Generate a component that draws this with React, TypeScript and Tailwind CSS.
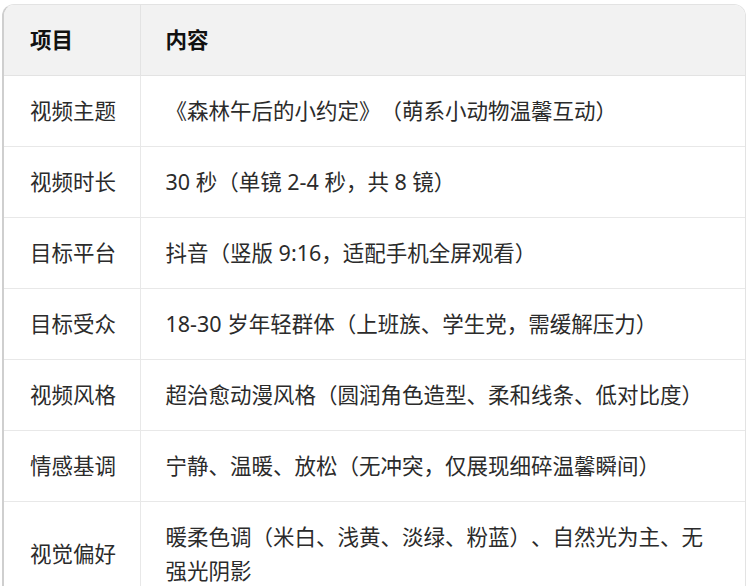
const ROWS: [string, string][] = [
  ["视频主题", "《森林午后的小约定》（萌系小动物温馨互动）"],
  ["视频时长", "30 秒（单镜 2-4 秒，共 8 镜）"],
  ["目标平台", "抖音（竖版 9:16，适配手机全屏观看）"],
  ["目标受众", "18-30 岁年轻群体（上班族、学生党，需缓解压力）"],
  ["视频风格", "超治愈动漫风格（圆润角色造型、柔和线条、低对比度）"],
  ["情感基调", "宁静、温暖、放松（无冲突，仅展现细碎温馨瞬间）"],
  ["视觉偏好", "暖柔色调（米白、浅黄、淡绿、粉蓝）、自然光为主、无强光阴影"],
];

export default function App() {
  return (
    <div
      className="h-[586px] w-[748px] overflow-hidden bg-white pl-[2px] pr-[2px] pt-[4px] [text-spacing-trim:space-all]"
      style={{ fontFamily: '"Noto Sans", "Noto Sans CJK SC", sans-serif' }}
    >
      <div className="overflow-hidden rounded-t-xl border border-[#e3e3e3] border-l-[#cfcfcf] border-l-2">
        <table className="w-full table-fixed border-collapse text-left text-[21.5px] leading-[34px] text-[#2b2b2b]">
          <thead>
            <tr className="bg-[#f2f2f2]">
              <th className="w-[136px] border-r border-b border-[#e3e3e3] pl-[26px] pr-0 py-[18px] font-bold text-[#111]">
                项目
              </th>
              <th className="border-b border-[#e3e3e3] px-[25px] py-[18px] font-bold text-[#111]">
                内容
              </th>
            </tr>
          </thead>
          <tbody>
            {ROWS.map(([k, v]) => (
              <tr key={k}>
                <td className="border-r border-b border-[#e8e8e8] pl-[26px] pr-0 py-[18px] whitespace-nowrap">
                  {k}
                </td>
                <td className="border-b border-[#e8e8e8] px-[25px] py-[18px]">{v}</td>
              </tr>
            ))}
          </tbody>
        </table>
      </div>
    </div>
  );
}
